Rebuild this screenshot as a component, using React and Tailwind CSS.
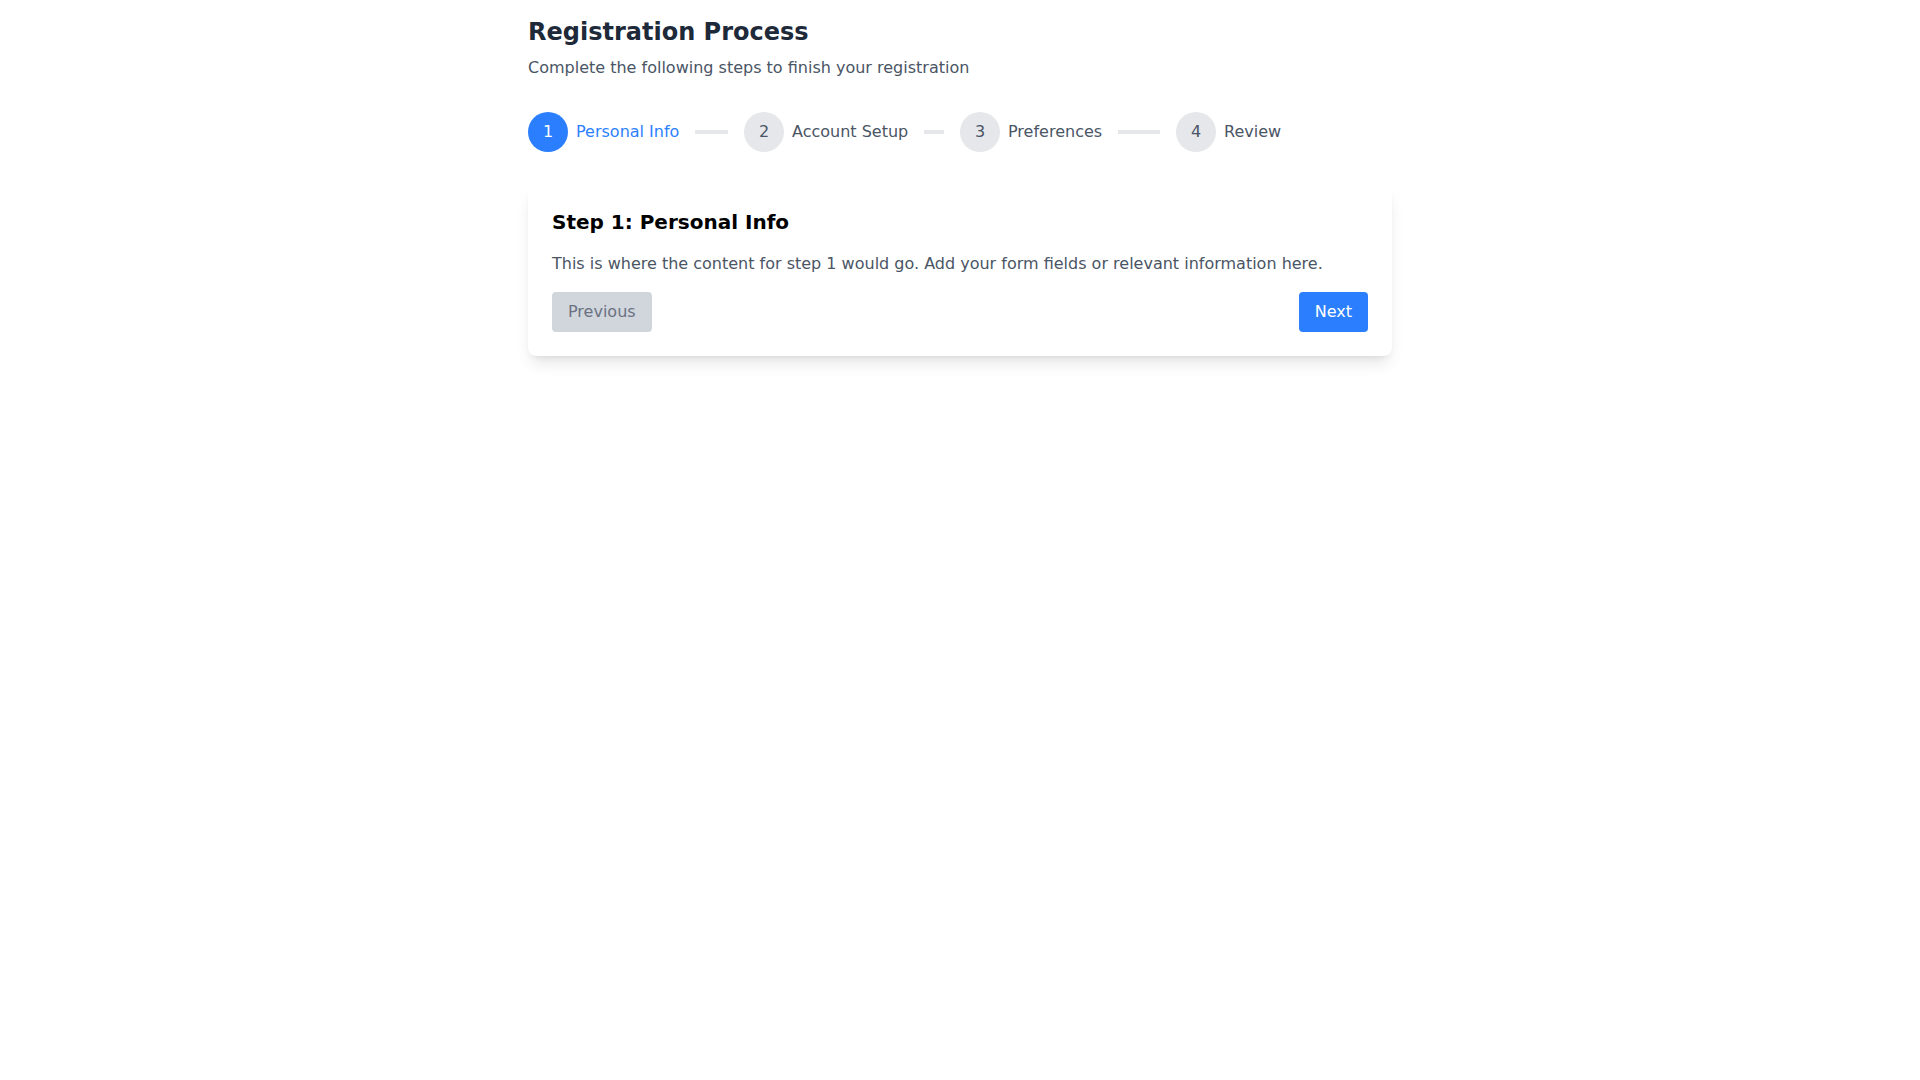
import React from "react";

const steps = ["Personal Info", "Account Setup", "Preferences", "Review"];

export default function App() {
  return (
    <div className="min-h-screen bg-white" style={{ fontFamily: '"DejaVu Sans", sans-serif' }}>
      <div className="max-w-4xl mx-auto px-4 pt-4">
        <h1 className="text-2xl font-bold text-gray-800">Registration Process</h1>
        <p className="mt-2 text-base text-gray-600">Complete the following steps to finish your registration</p>
        <div className="mt-8 flex items-center">
          {steps.map((s, i) => (
            <div key={s} className="flex-1 flex items-center">
              <div
                className={
                  i === 0
                    ? "w-10 h-10 rounded-full flex items-center justify-center bg-blue-500 text-white"
                    : "w-10 h-10 rounded-full flex items-center justify-center bg-gray-200 text-gray-600"
                }
              >
                {i + 1}
              </div>
              <span className={i === 0 ? "ml-2 text-blue-500" : "ml-2 text-gray-600"}>{s}</span>
              {i < steps.length - 1 && <div className="flex-1 h-1 mx-4 bg-gray-200"></div>}
            </div>
          ))}
        </div>
        <div className="mt-8 bg-white rounded-lg shadow-lg p-6">
          <h2 className="text-xl font-bold text-black mb-4">Step 1: Personal Info</h2>
          <p className="text-gray-600 mb-4">
            This is where the content for step 1 would go. Add your form fields or relevant information here.
          </p>
          <div className="flex justify-between">
            <button className="px-4 py-2 rounded bg-gray-300 text-gray-500">Previous</button>
            <button className="px-4 py-2 rounded bg-blue-500 text-white">Next</button>
          </div>
        </div>
      </div>
    </div>
  );
}
